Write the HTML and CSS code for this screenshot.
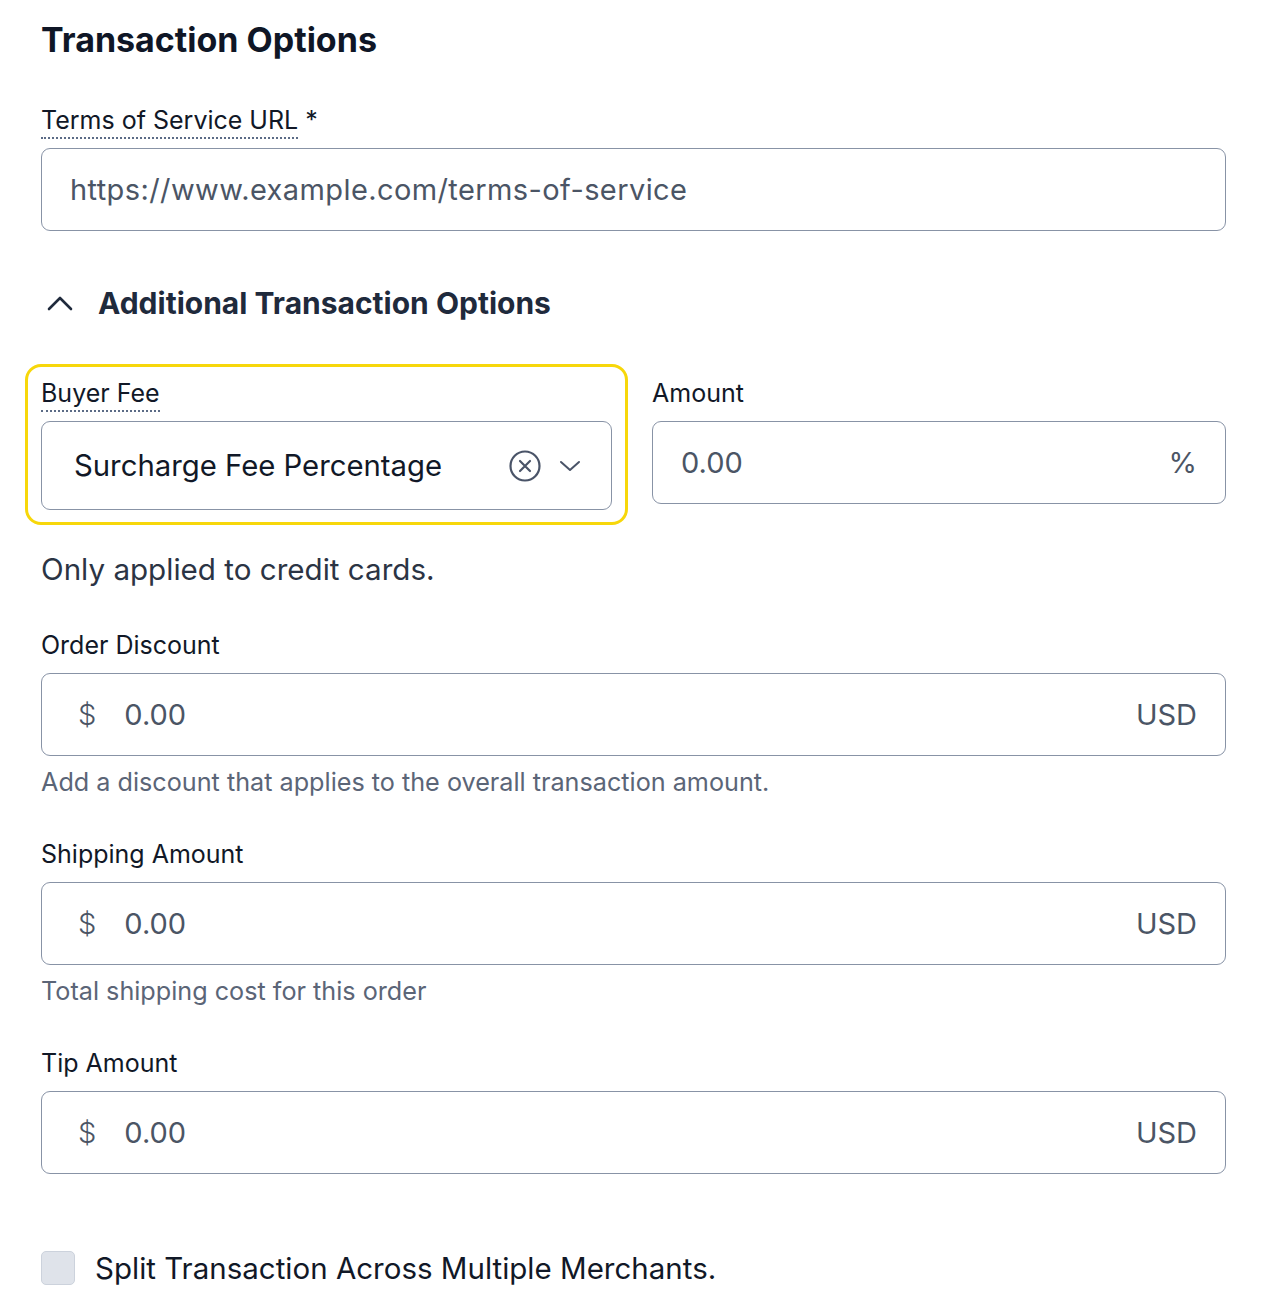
FILE: index.html
```html
<!DOCTYPE html>
<html lang="en">
<head>
    <meta charset="UTF-8">
    <title>Transaction Options</title>
    <link rel="stylesheet" href="styles.css">
</head>
<body>

<div class="panel">
    <h1 class="title">Transaction Options</h1>

    <div class="field-tos">
        <label class="label"><span class="dotted">Terms of Service URL</span> *</label>
        <div class="input">
            <span class="placeholder">https://www.example.com/terms-of-service</span>
        </div>
    </div>

    <div class="section-toggle">
        <svg class="caret-up" width="26" height="16" viewBox="0 0 26 16">
            <path d="M2 14 L13 3 L24 14" fill="none" stroke="#1f2a3c" stroke-width="2.6" stroke-linecap="round" stroke-linejoin="round"/>
        </svg>
        <span>Additional Transaction Options</span>
    </div>

    <div class="fee-row">
        <div class="fee-highlight">
            <label class="label"><span class="dotted">Buyer Fee</span></label>
            <div class="input select">
                <span class="value">Surcharge Fee Percentage</span>
                <span class="select-icons">
                    <svg width="34" height="34" viewBox="0 0 34 34">
                        <circle cx="17" cy="17" r="14.5" fill="none" stroke="#4a5468" stroke-width="2.2"/>
                        <path d="M12 12 L22 22 M22 12 L12 22" stroke="#4a5468" stroke-width="2.2" stroke-linecap="round"/>
                    </svg>
                    <svg width="22" height="14" viewBox="0 0 22 14">
                        <path d="M2 3 L11 11 L20 3" fill="none" stroke="#4a5468" stroke-width="2" stroke-linecap="round" stroke-linejoin="round"/>
                    </svg>
                </span>
            </div>
        </div>
        <div class="fee-amount">
            <label class="label">Amount</label>
            <div class="input">
                <span class="placeholder">0.00</span>
                <span class="suffix">%</span>
            </div>
        </div>
    </div>

    <p class="note">Only applied to credit cards.</p>

    <div class="field">
        <label class="label">Order Discount</label>
        <div class="input money">
            <span class="prefix">$</span>
            <span class="placeholder">0.00</span>
            <span class="suffix">USD</span>
        </div>
        <p class="help">Add a discount that applies to the overall transaction amount.</p>
    </div>

    <div class="field">
        <label class="label">Shipping Amount</label>
        <div class="input money">
            <span class="prefix">$</span>
            <span class="placeholder">0.00</span>
            <span class="suffix">USD</span>
        </div>
        <p class="help">Total shipping cost for this order</p>
    </div>

    <div class="field">
        <label class="label">Tip Amount</label>
        <div class="input money">
            <span class="prefix">$</span>
            <span class="placeholder">0.00</span>
            <span class="suffix">USD</span>
        </div>
    </div>

    <label class="checkbox-row">
        <span class="checkbox"></span>
        <span>Split Transaction Across Multiple Merchants.</span>
    </label>
</div>

</body>
</html>
```

FILE: styles.css
```css
body, html {
    margin: 0;
    padding: 0;
    background-color: #ffffff;
    font-family: Inter, "Liberation Sans", sans-serif;
    color: #111827;
}

.panel {
    width: 1185px;
    margin-left: 41px;
    padding-top: 18px;
}

.title {
    font-size: 34px;
    font-weight: 700;
    color: #0f1626;
    margin: 0 0 42px 0;
    line-height: 44px;
}

.label {
    display: block;
    font-size: 25px;
    line-height: 32px;
    color: #111827;
    margin-bottom: 12px;
}

.dotted {
    border-bottom: 2px dotted #5b6b86;
    padding-bottom: 2px;
}

.input {
    display: flex;
    align-items: center;
    height: 83px;
    border: 1.5px solid #8893a6;
    border-radius: 9px;
    padding: 0 28px;
    box-sizing: border-box;
    font-size: 29px;
    line-height: 34px;
}

.placeholder {
    color: #4b5565;
}

.field-tos .placeholder {
    letter-spacing: 0.4px;
}

.suffix {
    margin-left: auto;
    color: #4b5565;
}

/* sección desplegable */
.section-toggle {
    display: flex;
    align-items: center;
    gap: 25px;
    margin: 54px 0 0 6px;
    font-size: 30px;
    font-weight: 700;
    color: #1f2a3c;
    height: 36px;
}

.fee-row {
    display: flex;
    gap: 24px;
    margin: 43px 0 0 -16px;
}

.fee-highlight {
    width: 603px;
    box-sizing: border-box;
    border: 3px solid #f7d70a;
    border-radius: 16px;
    padding: 10px 13px 12px 13px;
}

.fee-highlight .label {
    margin-bottom: 12px;
}

.select {
    height: 89px;
    padding: 0 30px 0 32px;
}

.select .value {
    font-size: 29.3px;
    color: #111827;
}

.select-icons {
    margin-left: auto;
    display: flex;
    align-items: center;
    gap: 17px;
}

.fee-amount {
    flex: 1;
    padding-top: 13px;
}

.note {
    font-size: 29.6px;
    line-height: 36px;
    color: #2b3444;
    margin: 26px 0 0 0;
}

.field {
    margin-top: 42px;
}

.field + .field {
    margin-top: 40px;
}

.field .label {
    margin-bottom: 12px;
}

.money .prefix {
    color: #4b5565;
    font-weight: 300;
    margin: 0 28px 0 8px;
}

.help {
    font-size: 25.2px;
    line-height: 32px;
    color: #5b6577;
    margin: 10px 0 0 0;
}

.checkbox-row {
    display: flex;
    align-items: center;
    gap: 20px;
    margin-top: 76px;
    font-size: 29.5px;
    line-height: 36px;
    color: #111827;
}

.checkbox {
    width: 34px;
    height: 34px;
    background-color: #dfe3ea;
    border: 1.5px solid #ccd2dc;
    border-radius: 5px;
    box-sizing: border-box;
}
```
